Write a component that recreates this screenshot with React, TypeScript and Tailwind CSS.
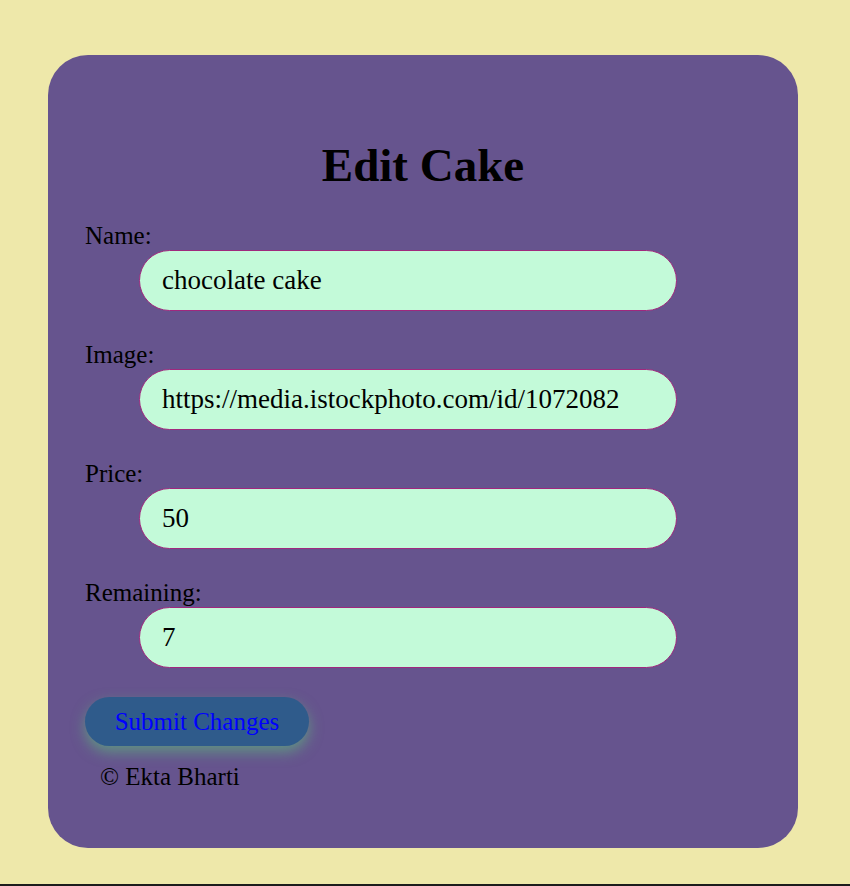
import React, { useState } from 'react'

const fields = [
  { label: 'Name:', value: 'chocolate cake' },
  { label: 'Image:', value: 'https://media.istockphoto.com/id/1072082' },
  { label: 'Price:', value: '50' },
  { label: 'Remaining:', value: '7' },
]

const EditCake: React.FunctionComponent = () => {
  const [values, setValues] = useState(fields.map((f) => f.value))

  const onChange = (i: number, v: string): void => {
    const next = [...values]
    next[i] = v
    setValues(next)
  }

  return (
    <main
      className="h-[886px] w-full bg-[#eee8aa] border-b-2 border-[#1c1c1c] pt-[55px]"
      style={{ fontFamily: '"Liberation Serif", serif' }}
    >
      <div className="ml-[48px] w-[750px] h-[793px] rounded-[40px] bg-[#66548e] px-[37px] pt-[84px]">
        <h1 className="text-center text-[47px] leading-[52px] font-bold text-black">Edit Cake</h1>
        <form className="mt-[32px]" onSubmit={(e) => e.preventDefault()}>
          {fields.map((field, i) => (
            <div key={field.label} className={i > 0 ? 'mt-[31px]' : ''}>
              <label className="block text-[25px] leading-[26px] text-black">{field.label}</label>
              <input
                className="mt-[1px] ml-[54px] block w-[538px] h-[61px] rounded-full border border-[#a0287e] bg-[#c3fad9] px-[22px] text-[27px] text-black outline-none"
                value={values[i]}
                onChange={(e) => onChange(i, e.target.value)}
              />
            </div>
          ))}
          <button
            type="submit"
            className="mt-[29px] block w-[224px] h-[49px] rounded-full bg-[#2f5b8b] text-[25px] text-[#0000ff] shadow-[0_6px_14px_0_rgba(90,210,120,0.5)]"
          >
            Submit Changes
          </button>
        </form>
        <p className="mt-[18px] ml-[15px] text-[25px] leading-[26px] text-black">© Ekta Bharti</p>
      </div>
    </main>
  )
}

export default function App() {
  return <EditCake />
}
